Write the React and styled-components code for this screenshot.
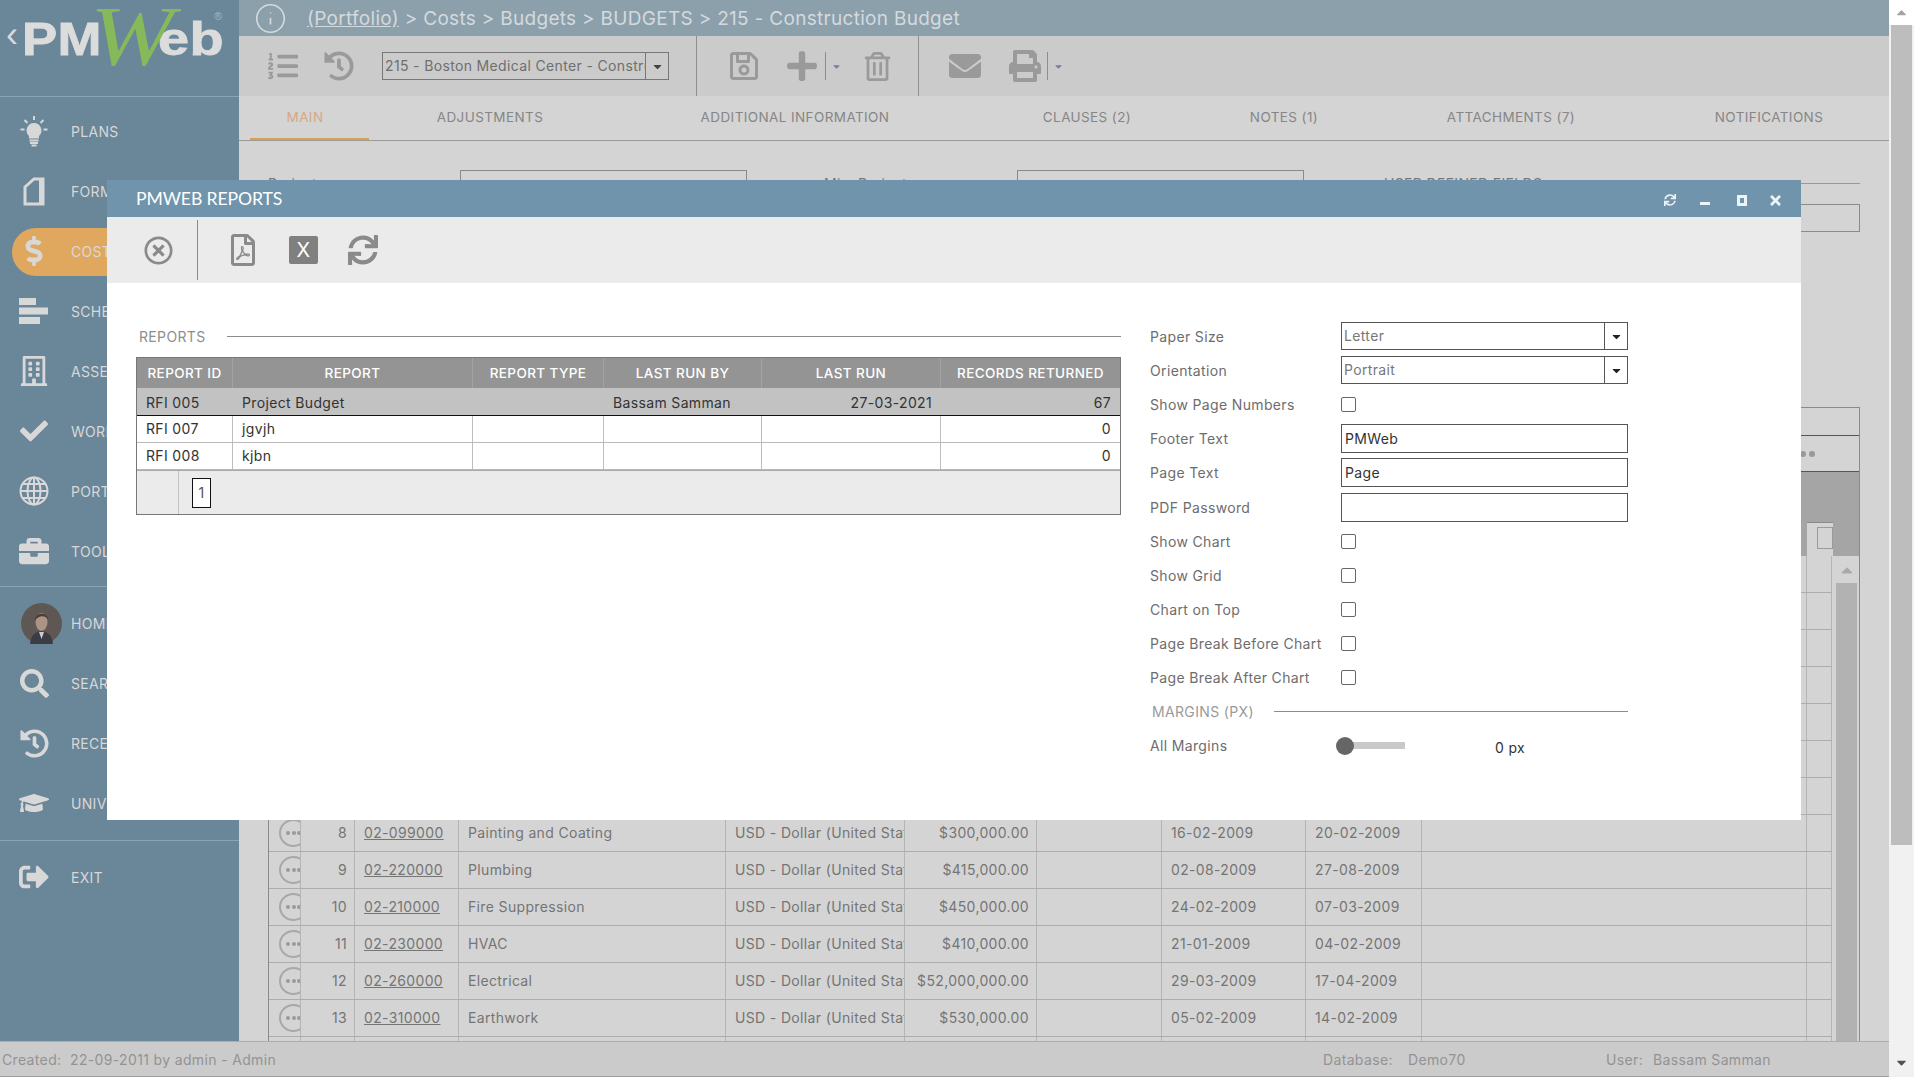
import React from "react";
import styled, { createGlobalStyle } from "styled-components";
import {
  FaListOl,
  FaHistory,
  FaRegSave,
  FaPlus,
  FaRegTrashAlt,
  FaEnvelope,
  FaPrint,
  FaRegTimesCircle,
  FaRegFilePdf,
  FaSync,
  FaTimes,
  FaDollarSign,
  FaRegBuilding,
  FaCheck,
  FaBriefcase,
  FaSearch,
  FaGraduationCap,
  FaSignOutAlt,
  FaCaretDown,
  FaCaretUp,
} from "react-icons/fa";
import { Info } from "lucide-react";

const GlobalStyle = createGlobalStyle`
  html, body {
    margin: 0;
    padding: 0;
    height: 100%;
    overflow: hidden;
  }
  body {
    font-family: Inter, "Open Sans", sans-serif;
    font-size: 14px;
    letter-spacing: 0.35px;
  }
  * {
    box-sizing: border-box;
  }
`;

const BulbIcon = () => (
  <svg width="30" height="31" viewBox="0 0 30 31" fill="none">
    <path d="M15 7 a7.5 7.5 0 0 1 5 13 v2.5 h-10 v-2.5 a7.5 7.5 0 0 1 5 -13 Z" fill="currentColor" />
    <path d="M10.5 24.5 h9 M11 27 h8 M12.5 29.5 h5" stroke="currentColor" strokeWidth="1.8" />
    <path d="M15 0 v4 M5.5 4 l3 3 M24.5 4 l-3 3 M1.5 13.5 h4 M24.5 13.5 h4" stroke="currentColor" strokeWidth="2" />
  </svg>
);

const FormIcon = () => (
  <svg width="22" height="29" viewBox="0 0 22 29" fill="none">
    <path d="M2 10 L11 2 H20 V27 H2 Z" stroke="currentColor" strokeWidth="3" />
    <path d="M16 3 H20 V26 H16 Z" fill="currentColor" />
  </svg>
);

const ScheduleIcon = () => (
  <svg width="30" height="26" viewBox="0 0 30 26" fill="currentColor">
    <rect x="0" y="0" width="17" height="7" />
    <rect x="0" y="9.5" width="29" height="7" />
    <rect x="0" y="19" width="21" height="7" />
  </svg>
);

const GlobeIcon = () => (
  <svg width="30" height="30" viewBox="0 0 30 30" fill="none" stroke="currentColor" strokeWidth="2">
    <circle cx="15" cy="15" r="13.5" />
    <ellipse cx="15" cy="15" rx="6.5" ry="13.5" />
    <path d="M15 1.5 V28.5 M1.5 15 H28.5 M3.5 8 H26.5 M3.5 22 H26.5" />
  </svg>
);

const Avatar = () => (
  <svg width="41" height="41" viewBox="0 0 41 41">
    <circle cx="20.5" cy="20.5" r="20.5" fill="#5f5753" />
    <path d="M9 41 C10 31 15 29 20 28 C26 29 31 31 32 41 Z" fill="#3b3c44" />
    <path d="M18 29 L20.5 36 L23 29 Z" fill="#c9ccd0" />
    <ellipse cx="20.5" cy="19" rx="6" ry="9" fill="#ab9385" />
    <path d="M14 18 C13 9 27 8 27 17 C25 12 17 12 14 18 Z" fill="#4b3e37" />
  </svg>
);

const navTop = [
  { label: "PLANS", icon: <BulbIcon /> },
  { label: "FORMS", icon: <FormIcon /> },
  { label: "COSTS", icon: <FaDollarSign size={30} />, active: true },
  { label: "SCHEDULE", icon: <ScheduleIcon /> },
  { label: "ASSETS", icon: <FaRegBuilding size={30} /> },
  { label: "WORK", icon: <FaCheck size={28} /> },
  { label: "PORTFOLIO", icon: <GlobeIcon /> },
  { label: "TOOLS", icon: <FaBriefcase size={30} /> },
];

const navBottom = [
  { label: "HOME", icon: <Avatar />, shift: 14 },
  { label: "SEARCH", icon: <FaSearch size={29} /> },
  { label: "RECENT", icon: <FaHistory size={29} /> },
  { label: "UNIVERSITY", icon: <FaGraduationCap size={30} /> },
];

const tabs = [
  { label: "MAIN", width: 119, active: true },
  { label: "ADJUSTMENTS", width: 242 },
  { label: "ADDITIONAL INFORMATION", width: 368 },
  { label: "CLAUSES (2)", width: 216 },
  { label: "NOTES (1)", width: 178 },
  { label: "ATTACHMENTS (7)", width: 276 },
  { label: "NOTIFICATIONS", width: 240 },
];

const usd = "USD - Dollar (United States of America)";

// rows 1-7 sit behind the dialog
const gridRows = [
  { no: 1 },
  { no: 2 },
  { no: 3 },
  { no: 4 },
  { no: 5 },
  { no: 6 },
  { no: 7 },
  { no: 8, code: "02-099000", desc: "Painting and Coating", cur: usd, amt: "$300,000.00", start: "16-02-2009", end: "20-02-2009" },
  { no: 9, code: "02-220000", desc: "Plumbing", cur: usd, amt: "$415,000.00", start: "02-08-2009", end: "27-08-2009" },
  { no: 10, code: "02-210000", desc: "Fire Suppression", cur: usd, amt: "$450,000.00", start: "24-02-2009", end: "07-03-2009" },
  { no: 11, code: "02-230000", desc: "HVAC", cur: usd, amt: "$410,000.00", start: "21-01-2009", end: "04-02-2009" },
  { no: 12, code: "02-260000", desc: "Electrical", cur: usd, amt: "$52,000,000.00", start: "29-03-2009", end: "17-04-2009" },
  { no: 13, code: "02-310000", desc: "Earthwork", cur: usd, amt: "$530,000.00", start: "05-02-2009", end: "14-02-2009" },
  { no: 14 },
];

const reports = [
  { id: "RFI 005", name: "Project Budget", by: "Bassam Samman", run: "27-03-2021", records: 67, selected: true },
  { id: "RFI 007", name: "jgvjh", records: 0 },
  { id: "RFI 008", name: "kjbn", records: 0 },
];

const SideItem = ({ item }) => (
  <NavItem>
    {item.active && <ActivePill />}
    <NavIcon $shift={item.shift}>{item.icon}</NavIcon>
    <NavLabel>{item.label}</NavLabel>
  </NavItem>
);

const CheckRow = ({ label }) => (
  <FormRow>
    <FormLabel>{label}</FormLabel>
    <CheckBox />
  </FormRow>
);

const SelectRow = ({ label, value }) => (
  <FormRow>
    <FormLabel>{label}</FormLabel>
    <SelectBox>
      <SelectValue>{value}</SelectValue>
      <SelectArrow>
        <FaCaretDown size={13} />
      </SelectArrow>
    </SelectBox>
  </FormRow>
);

const InputRow = ({ label, value }) => (
  <FormRow $tall>
    <FormLabel>{label}</FormLabel>
    <TextBox>{value}</TextBox>
  </FormRow>
);

const App = () => {
  return (
    <>
      <GlobalStyle />
      <Page>
        <Frame>
          <Body>
            <Sidebar>
              <LogoArea>
                <LogoBack>‹</LogoBack>
                <svg width="215" height="70" viewBox="0 0 215 70">
                  <text x="-2" y="55" textLength="80" lengthAdjust="spacingAndGlyphs" fontFamily="Liberation Sans" fontWeight="700" fontSize="46" fill="#dcdcdc" stroke="#dcdcdc" strokeWidth="0.8">
                    PM
                  </text>
                  <text x="134" y="55" textLength="66" lengthAdjust="spacingAndGlyphs" fontFamily="Liberation Sans" fontWeight="700" fontSize="46" fill="#dcdcdc" stroke="#dcdcdc" strokeWidth="0.8">
                    eb
                  </text>
                  <text x="66" y="65" textLength="84" lengthAdjust="spacingAndGlyphs" fontFamily="Liberation Serif" fontStyle="italic" fontSize="84" fill="#86b95a">
                    W
                  </text>
                  <text x="190" y="20" fontFamily="Liberation Sans" fontSize="11" fill="#a9b9c4">
                    ®
                  </text>
                </svg>
              </LogoArea>
              <NavGroup $top={4} $bottom={5}>
                {navTop.map((item) => (
                  <SideItem key={item.label} item={item} />
                ))}
              </NavGroup>
              <NavGroup $top={6} $bottom={7}>
                {navBottom.map((item) => (
                  <SideItem key={item.label} item={item} />
                ))}
              </NavGroup>
              <NavGroup $top={6} $bottom={0}>
                <SideItem item={{ label: "EXIT", icon: <FaSignOutAlt size={30} /> }} />
              </NavGroup>
            </Sidebar>

            <Main>
              <TopBar>
                <Info size={33} strokeWidth={1.2} />
                <Crumbs>
                  <CrumbLink>(Portfolio)</CrumbLink> &gt; Costs &gt; Budgets &gt; BUDGETS &gt; 215 - Construction Budget
                </Crumbs>
              </TopBar>

              <ToolBar>
                <ToolGroup $width={458}>
                  <ToolIcon $left={29}>
                    <FaListOl size={30} />
                  </ToolIcon>
                  <ToolIcon $left={26}>
                    <FaHistory size={30} />
                  </ToolIcon>
                  <RecordSelect>
                    <RecordValue>215 - Boston Medical Center - Construction Budget</RecordValue>
                    <RecordArrow>
                      <FaCaretDown size={13} />
                    </RecordArrow>
                  </RecordSelect>
                </ToolGroup>
                <ToolGroup $width={222}>
                  <ToolIcon $left={31}>
                    <FaRegSave size={32} />
                  </ToolIcon>
                  <ToolIcon $left={25}>
                    <FaPlus size={34} />
                  </ToolIcon>
                  <MiniSplit />
                  <MiniCaret>
                    <FaCaretDown size={11} />
                  </MiniCaret>
                  <ToolIcon $left={21}>
                    <FaRegTrashAlt size={29} />
                  </ToolIcon>
                </ToolGroup>
                <ToolGroup>
                  <ToolIcon $left={30}>
                    <FaEnvelope size={32} />
                  </ToolIcon>
                  <ToolIcon $left={28}>
                    <FaPrint size={32} />
                  </ToolIcon>
                  <MiniSplit />
                  <MiniCaret>
                    <FaCaretDown size={11} />
                  </MiniCaret>
                </ToolGroup>
              </ToolBar>

              <TabBar>
                {tabs.map((tab) => (
                  <Tab key={tab.label} $width={tab.width} $active={tab.active}>
                    {tab.label}
                  </Tab>
                ))}
              </TabBar>

              <Content>
                <HeaderForm>
                  <FieldLabel $width={192}>Project</FieldLabel>
                  <FieldBox $width={287} />
                  <FieldLabel $width={193} $gap={77}>
                    Min. Project
                  </FieldLabel>
                  <FieldBox $width={287} />
                  <Udf>
                    <UdfTitle>
                      <span>USER DEFINED FIELDS</span>
                      <UdfLine />
                    </UdfTitle>
                    <UdfInput />
                  </Udf>
                </HeaderForm>

                <GridFrame>
                  <GridStrip />
                  <GridStrip $tall>
                    <MoreDot />
                    <MoreDot />
                  </GridStrip>
                  <GridHead>
                    <FilterCell>
                      <FilterInput />
                    </FilterCell>
                  </GridHead>
                  <GridBody>
                    <GridRows>
                      {gridRows.map((row) => (
                        <GridRow key={row.no}>
                          <ActionCell>
                            <ActionButton>
                              <ActionDot />
                              <ActionDot />
                              <ActionDot />
                            </ActionButton>
                          </ActionCell>
                          <GridCell $right>{row.code ? row.no : ""}</GridCell>
                          <GridCell>
                            <CodeLink>{row.code}</CodeLink>
                          </GridCell>
                          <GridCell>{row.desc}</GridCell>
                          <GridCell>{row.cur}</GridCell>
                          <GridCell $right>{row.amt}</GridCell>
                          <GridCell />
                          <GridCell>{row.start}</GridCell>
                          <GridCell>{row.end}</GridCell>
                          <GridCell />
                          <GridCell />
                        </GridRow>
                      ))}
                    </GridRows>
                    <GridScroll>
                      <GridScrollUp>
                        <FaCaretUp size={18} />
                      </GridScrollUp>
                      <GridScrollThumb />
                    </GridScroll>
                  </GridBody>
                </GridFrame>
              </Content>
            </Main>
          </Body>

          <StatusBar>
            <StatusText $left={2}>Created:&nbsp; 22-09-2011 by admin - Admin</StatusText>
            <StatusText $left={1323}>Database:</StatusText>
            <StatusText $left={1408}>Demo70</StatusText>
            <StatusText $left={1606}>User:</StatusText>
            <StatusText $left={1653}>Bassam Samman</StatusText>
          </StatusBar>
        </Frame>

        <PageScroll>
          <PageScrollEnd>
            <FaCaretUp size={15} color="#a3a3a3" />
          </PageScrollEnd>
          <PageScrollThumb />
          <PageScrollTrack />
          <PageScrollEnd $bottom>
            <FaCaretDown size={15} color="#505050" />
          </PageScrollEnd>
        </PageScroll>

        <Dialog>
          <DialogTitle>
            <DialogName>PMWEB REPORTS</DialogName>
            <WindowButtons>
              <WindowButton $x={1670}>
                <FaSync size={12} />
              </WindowButton>
              <WindowButton $x={1705}>
                <MinimizeMark />
              </WindowButton>
              <WindowButton $x={1742}>
                <MaximizeMark />
              </WindowButton>
              <WindowButton $x={1775}>
                <FaTimes size={15} />
              </WindowButton>
            </WindowButtons>
          </DialogTitle>

          <DialogTools>
            <DialogTool $left={37}>
              <FaRegTimesCircle size={29} />
            </DialogTool>
            <DialogSplit />
            <DialogTool $left={29}>
              <FaRegFilePdf size={32} />
            </DialogTool>
            <ExcelButton>X</ExcelButton>
            <DialogTool $left={30}>
              <FaSync size={30} />
            </DialogTool>
          </DialogTools>

          <DialogBody>
            <ReportsPane>
              <SectionTitle>
                <span>REPORTS</span>
                <SectionLine />
              </SectionTitle>
              <ReportTable>
                <ReportHead>
                  <HeadCell>REPORT ID</HeadCell>
                  <HeadCell>REPORT</HeadCell>
                  <HeadCell>REPORT TYPE</HeadCell>
                  <HeadCell>LAST RUN BY</HeadCell>
                  <HeadCell>LAST RUN</HeadCell>
                  <HeadCell>RECORDS RETURNED</HeadCell>
                </ReportHead>
                {reports.map((r) => (
                  <ReportRow key={r.id} $selected={r.selected}>
                    <ReportCell $selected={r.selected}>{r.id}</ReportCell>
                    <ReportCell $selected={r.selected}>{r.name}</ReportCell>
                    <ReportCell $selected={r.selected} />
                    <ReportCell $selected={r.selected}>{r.by}</ReportCell>
                    <ReportCell $selected={r.selected} $right>
                      {r.run}
                    </ReportCell>
                    <ReportCell $selected={r.selected} $right>
                      {r.records}
                    </ReportCell>
                  </ReportRow>
                ))}
                <Pager>
                  <PagerFirst />
                  <PageNumber>1</PageNumber>
                </Pager>
              </ReportTable>
            </ReportsPane>

            <OptionsPane>
              <SelectRow label="Paper Size" value="Letter" />
              <SelectRow label="Orientation" value="Portrait" />
              <CheckRow label="Show Page Numbers" />
              <InputRow label="Footer Text" value="PMWeb" />
              <InputRow label="Page Text" value="Page" />
              <InputRow label="PDF Password" value="" />
              <CheckRow label="Show Chart" />
              <CheckRow label="Show Grid" />
              <CheckRow label="Chart on Top" />
              <CheckRow label="Page Break Before Chart" />
              <CheckRow label="Page Break After Chart" />
              <MarginsTitle>
                <span>MARGINS (PX)</span>
                <SectionLine />
              </MarginsTitle>
              <FormRow>
                <FormLabel>All Margins</FormLabel>
                <SliderTrack>
                  <SliderThumb />
                </SliderTrack>
                <SliderValue>0 px</SliderValue>
              </FormRow>
            </OptionsPane>
          </DialogBody>
        </Dialog>
      </Page>
    </>
  );
};

const Page = styled.div`
  position: relative;
  display: flex;
  width: 1914px;
  height: 1077px;
  overflow: hidden;
  background: #d4d4d4;
`;

const Frame = styled.div`
  display: flex;
  flex-direction: column;
  width: 1889px;
  height: 100%;
`;

const Body = styled.div`
  display: flex;
  height: 1041px;
`;

const Sidebar = styled.div`
  flex: 0 0 239px;
  display: flex;
  flex-direction: column;
  background: #6a8699;
  color: #d8d8d8;
`;

const LogoArea = styled.div`
  position: relative;
  height: 97px;
  padding-left: 24px;
  border-bottom: 1px solid #8ba2b1;
`;

const LogoBack = styled.span`
  position: absolute;
  left: 6px;
  top: 14px;
  font: 36px "Liberation Sans", sans-serif;
  color: #d8d8d8;
`;

const NavGroup = styled.div`
  padding: ${(p) => p.$top}px 0 ${(p) => p.$bottom}px;
  border-bottom: 1px solid #8ba2b1;

  &:last-child {
    border-bottom: 0;
  }
`;

const NavItem = styled.div`
  position: relative;
  display: flex;
  align-items: center;
  height: 60px;
`;

const ActivePill = styled.div`
  position: absolute;
  left: 12px;
  top: 7px;
  width: 300px;
  height: 48px;
  border-radius: 24px;
  background: #dfa85e;
`;

const NavIcon = styled.div`
  position: relative;
  flex: 0 0 71px;
  display: flex;
  justify-content: center;
  padding-right: 3px;
  padding-left: ${(p) => p.$shift || 0}px;
`;

const NavLabel = styled.span`
  position: relative;
  letter-spacing: 0.3px;
`;

const Main = styled.div`
  flex: 1;
  min-width: 0;
  display: flex;
  flex-direction: column;
`;

const TopBar = styled.div`
  height: 36px;
  display: flex;
  align-items: center;
  padding-left: 15px;
  background: #8ca0ac;
  color: #d3dade;
`;

const Crumbs = styled.div`
  margin-left: 20px;
  font-size: 19px;
  letter-spacing: 0.3px;
  white-space: nowrap;
`;

const CrumbLink = styled.span`
  text-decoration: underline;
`;

const ToolBar = styled.div`
  height: 60px;
  display: flex;
  background: #cbcbcb;
  color: #9a9a9a;
`;

const ToolGroup = styled.div`
  width: ${(p) => (p.$width ? `${p.$width}px` : "auto")};
  display: flex;
  align-items: center;
  border-right: ${(p) => (p.$width ? "1px solid #8f8f8f" : "0")};
`;

const ToolIcon = styled.div`
  display: flex;
  margin-left: ${(p) => p.$left}px;
`;

const RecordSelect = styled.div`
  width: 287px;
  height: 28px;
  margin-left: 28px;
  display: flex;
  border: 1px solid #777;
`;

const RecordValue = styled.div`
  flex: 1;
  min-width: 0;
  overflow: hidden;
  white-space: nowrap;
  padding-left: 2px;
  line-height: 26px;
  color: #6f6f6f;
`;

const RecordArrow = styled.div`
  flex: 0 0 23px;
  display: flex;
  align-items: center;
  justify-content: center;
  border-left: 1px solid #777;
  color: #444;
`;

const MiniSplit = styled.div`
  width: 1px;
  height: 28px;
  margin-left: 6px;
  background: #8d8d8d;
`;

const MiniCaret = styled.div`
  display: flex;
  margin-left: 5px;
  color: #7b7b9c;
`;

const TabBar = styled.div`
  height: 45px;
  display: flex;
  padding-left: 11px;
  border-bottom: 1px solid #9a9a9a;
  overflow: hidden;
`;

const Tab = styled.div`
  flex: 0 0 ${(p) => p.$width}px;
  height: 45px;
  padding-right: ${(p) => (p.$active ? "9px" : "0")};
  text-align: center;
  line-height: 42px;
  font-size: 13.5px;
  letter-spacing: 0.4px;
  color: ${(p) => (p.$active ? "#d5a885" : "#868686")};
  border-bottom: ${(p) => (p.$active ? "3px solid #d6a055" : "0")};
`;

const Content = styled.div`
  flex: 1;
  min-height: 0;
  display: flex;
  flex-direction: column;
  padding: 29px 29px 0 29px;
  overflow: hidden;
`;

const HeaderForm = styled.div`
  height: 237px;
  display: flex;
  align-items: flex-start;
`;

const FieldLabel = styled.div`
  flex: 0 0 ${(p) => p.$width}px;
  margin-left: ${(p) => p.$gap || 0}px;
  line-height: 28px;
  color: #777;
`;

const FieldBox = styled.div`
  flex: 0 0 ${(p) => p.$width}px;
  height: 28px;
  border: 1px solid #8a8a8a;
`;

const Udf = styled.div`
  flex: 1;
  margin-left: 80px;
`;

const UdfTitle = styled.div`
  display: flex;
  align-items: center;
  gap: 16px;
  height: 26px;
  color: #777;
  white-space: nowrap;
`;

const UdfLine = styled.div`
  flex: 1;
  height: 1px;
  background: #999;
`;

const UdfInput = styled.div`
  height: 28px;
  margin-top: 8px;
  border: 1px solid #8a8a8a;
`;

const GridFrame = styled.div`
  flex: 1;
  min-height: 0;
  display: flex;
  flex-direction: column;
  border-left: 1px solid #8a8a8a;
  border-right: 1px solid #8a8a8a;
  border-top: 1px solid #8a8a8a;
`;

const GridStrip = styled.div`
  flex: 0 0 ${(p) => (p.$tall ? "36px" : "28px")};
  display: flex;
  align-items: center;
  justify-content: flex-end;
  gap: 3px;
  padding-right: 44px;
  border-bottom: 1px solid #555;
`;

const MoreDot = styled.span`
  width: 6px;
  height: 6px;
  border-radius: 50%;
  background: #999;
`;

const GridHead = styled.div`
  flex: 0 0 84px;
  display: flex;
  align-items: flex-end;
  justify-content: flex-end;
  padding-right: 26px;
  background: #a5a5a5;
`;

const FilterCell = styled.div`
  width: 26px;
  height: 34px;
  padding: 4px 0 7px 10px;
  background: #d4d4d4;
  border-top: 1px solid #8a8a8a;
`;

const FilterInput = styled.div`
  height: 100%;
  border: 1px solid #9a9a9a;
`;

const GridBody = styled.div`
  flex: 1;
  min-height: 0;
  display: flex;
`;

const GridRows = styled.div`
  flex: 1;
  min-width: 0;
  overflow: hidden;
`;

const GridRow = styled.div`
  display: grid;
  grid-template-columns: 32px 54px 104px 267px 179px 132px 125px 144px 116px 385px 25px;
  height: 37px;
  border-bottom: 1px solid #acacac;
`;

const GridCell = styled.div`
  min-width: 0;
  overflow: hidden;
  white-space: nowrap;
  padding: 0 ${(p) => (p.$right ? "7px" : "9px")};
  text-align: ${(p) => (p.$right ? "right" : "left")};
  line-height: 35px;
  color: #757575;
  border-right: 1px solid #b4b4b4;
`;

const ActionCell = styled(GridCell)`
  padding: 4px 0 0 10px;
`;

const ActionButton = styled.div`
  width: 29px;
  height: 28px;
  display: flex;
  align-items: center;
  justify-content: center;
  gap: 1.5px;
  border: 2px solid #a8a8a8;
  border-radius: 50%;
`;

const ActionDot = styled.span`
  width: 4px;
  height: 4px;
  border-radius: 50%;
  background: #9a9a9a;
`;

const CodeLink = styled.span`
  text-decoration: underline;
`;

const GridScroll = styled.div`
  flex: 0 0 27px;
  display: flex;
  flex-direction: column;
  padding: 0 2px 0 4px;
`;

const GridScrollUp = styled.div`
  flex: 0 0 27px;
  display: flex;
  align-items: center;
  justify-content: center;
  color: #aaa;
`;

const GridScrollThumb = styled.div`
  flex: 1;
  background: #b2b2b2;
`;

const StatusBar = styled.div`
  position: relative;
  height: 36px;
  background: #cbcbcb;
  border-top: 1px solid #adadad;
  border-bottom: 1px solid #9c9c9c;
  color: #939393;
`;

const StatusText = styled.span`
  position: absolute;
  left: ${(p) => p.$left}px;
  top: 0;
  line-height: 35px;
  white-space: nowrap;
`;

const PageScroll = styled.div`
  flex: 1;
  display: flex;
  flex-direction: column;
  background: #f1f1f1;
`;

const PageScrollEnd = styled.div`
  flex: 0 0 ${(p) => (p.$bottom ? "29px" : "25px")};
  display: flex;
  align-items: center;
  justify-content: center;
  background: ${(p) => (p.$bottom ? "#f1f1f1" : "#fff")};
`;

const PageScrollThumb = styled.div`
  height: 820px;
  margin: 0 2px;
  background: #bdbdbd;
`;

const PageScrollTrack = styled.div`
  flex: 1;
`;

const Dialog = styled.div`
  position: absolute;
  left: 107px;
  top: 180px;
  width: 1694px;
  height: 640px;
  display: flex;
  flex-direction: column;
  background: #fff;
`;

const DialogTitle = styled.div`
  position: relative;
  flex: 0 0 37px;
  padding-left: 29px;
  background: #7094ab;
  color: #fff;
`;

const DialogName = styled.div`
  padding-top: 1px;
  font: 17.6px/36px Lato, sans-serif;
  letter-spacing: -0.1px;
`;

const WindowButtons = styled.div`
  color: #eef3f6;
`;

const WindowButton = styled.div`
  position: absolute;
  left: ${(p) => p.$x - 107 - 10}px;
  top: 10px;
  width: 20px;
  height: 20px;
  display: flex;
  align-items: center;
  justify-content: center;
`;

const MinimizeMark = styled.div`
  width: 10px;
  height: 3px;
  margin-top: 7px;
  background: currentColor;
`;

const MaximizeMark = styled.div`
  width: 10px;
  height: 11px;
  border: 3px solid currentColor;
`;

const DialogTools = styled.div`
  flex: 0 0 66px;
  display: flex;
  align-items: center;
  background: #ebebeb;
  color: #8a8a8a;
`;

const DialogTool = styled.div`
  display: flex;
  margin-left: ${(p) => p.$left}px;
`;

const DialogSplit = styled.div`
  width: 1px;
  height: 60px;
  margin-left: 24px;
  background: #8a8a8a;
`;

const ExcelButton = styled.div`
  width: 29px;
  height: 28px;
  margin-left: 30px;
  border-radius: 2px;
  background: #808080;
  color: #fff;
  text-align: center;
  font: 400 20px/28px Inter, sans-serif;
`;

const DialogBody = styled.div`
  flex: 1;
  min-height: 0;
  display: flex;
  padding: 36px 0 0 29px;
`;

const ReportsPane = styled.div`
  width: 985px;
  padding-top: 7px;
`;

const SectionTitle = styled.div`
  display: flex;
  align-items: center;
  gap: 21px;
  height: 20px;
  padding-left: 3px;
  color: #8e8e8e;
`;

const SectionLine = styled.div`
  flex: 1;
  height: 1px;
  background: #8c8c8c;
`;

const ReportTable = styled.div`
  margin-top: 11px;
  border: 1px solid #777;
`;

const ReportHead = styled.div`
  display: grid;
  grid-template-columns: 96px 240px 131px 158px 179px 1fr;
  height: 30px;
  background: #949494;
`;

const HeadCell = styled.div`
  text-align: center;
  font-size: 13.5px;
  font-weight: 500;
  line-height: 30px;
  letter-spacing: 0.4px;
  white-space: nowrap;
  color: #fff;
  border-right: 1px solid #a3a3a3;

  &:last-child {
    border-right: 0;
  }
`;

const ReportRow = styled.div`
  display: grid;
  grid-template-columns: 96px 240px 131px 158px 179px 1fr;
  height: ${(p) => (p.$selected ? "28px" : "27px")};
  background: ${(p) => (p.$selected ? "#c2c2c2" : "#fff")};
  border-bottom: 1px solid ${(p) => (p.$selected ? "#111" : "#b8b8b8")};
`;

const ReportCell = styled.div`
  padding: 0 9px;
  text-align: ${(p) => (p.$right ? "right" : "left")};
  line-height: ${(p) => (p.$selected ? "29px" : "26px")};
  color: #333;
  white-space: nowrap;
  border-right: ${(p) => (p.$selected ? "0" : "1px solid #bdbdbd")};

  &:last-child {
    border-right: 0;
  }
`;

const Pager = styled.div`
  display: flex;
  align-items: center;
  height: 44px;
  background: #ebebeb;
  border-top: 1px solid #aaa;
`;

const PagerFirst = styled.div`
  width: 42px;
  height: 100%;
  border-right: 1px solid #c4c4c4;
`;

const PageNumber = styled.div`
  width: 19px;
  height: 30px;
  margin-left: 13px;
  background: #fff;
  border: 1px solid #111;
  text-align: center;
  line-height: 28px;
  color: #555;
`;

const OptionsPane = styled.div`
  width: 478px;
  margin-left: 29px;
`;

const FormRow = styled.div`
  display: flex;
  align-items: center;
  height: ${(p) => (p.$tall ? "34.6px" : "34px")};
`;

const FormLabel = styled.div`
  flex: 0 0 191px;
  color: #6d6d6d;
  white-space: nowrap;
`;

const SelectBox = styled.div`
  width: 287px;
  height: 28px;
  display: flex;
  border: 1px solid #555;
`;

const SelectValue = styled.div`
  flex: 1;
  padding-left: 2px;
  line-height: 26px;
  color: #777;
`;

const SelectArrow = styled.div`
  flex: 0 0 23px;
  display: flex;
  align-items: center;
  justify-content: center;
  border-left: 1px solid #555;
  color: #222;
`;

const CheckBox = styled.div`
  width: 15px;
  height: 15px;
  border: 1px solid #666;
  border-radius: 2px;
`;

const TextBox = styled.div`
  width: 287px;
  height: 29px;
  padding-left: 3px;
  border: 1px solid #555;
  line-height: 27px;
  color: #333;
`;

const MarginsTitle = styled(SectionTitle)`
  height: 34px;
  gap: 20px;
  padding-left: 2px;
  color: #9a9a9a;
`;

const SliderTrack = styled.div`
  position: relative;
  width: 64px;
  height: 7px;
  background: #c9c9c9;
`;

const SliderThumb = styled.div`
  position: absolute;
  left: -5px;
  top: -5px;
  width: 18px;
  height: 18px;
  border-radius: 50%;
  background: #666;
`;

const SliderValue = styled.div`
  margin-left: 90px;
  margin-top: 3px;
  color: #333;
`;

export default App;
